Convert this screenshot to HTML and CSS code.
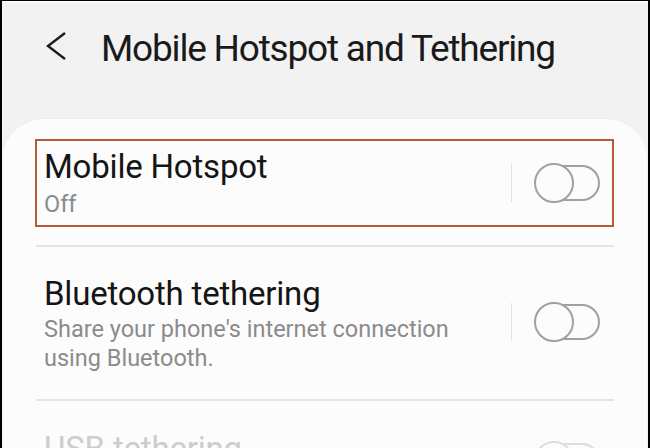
FILE: index.html
```html
<!DOCTYPE html>
<html lang="en">
<head>
<meta charset="utf-8" />
<title>Mobile Hotspot and Tethering</title>
<link rel="stylesheet" href="styles.css">
</head>
<body>
<div class="screen">
  <header class="appbar">
    <svg class="back" width="20" height="28" viewBox="0 0 20 28">
      <path d="M19 1 L2 14 L19 27" fill="none" stroke="#1c1c1c" stroke-width="2.4"/>
    </svg>
    <h1 class="title">Mobile Hotspot and Tethering</h1>
  </header>
  <main class="card">
    <div class="row row-hl">
      <div class="row-text">
        <div class="row-title">Mobile Hotspot</div>
        <div class="row-sub">Off</div>
      </div>
      <div class="row-sep"></div>
      <span class="switch"><span class="knob"></span></span>
    </div>
    <div class="divider"></div>
    <div class="row row-bt">
      <div class="row-text">
        <div class="row-title">Bluetooth tethering</div>
        <div class="row-sub">Share your phone's internet connection<br>using Bluetooth.</div>
      </div>
      <div class="row-sep"></div>
      <span class="switch"><span class="knob"></span></span>
    </div>
    <div class="divider"></div>
    <div class="row row-off">
      <div class="row-text">
        <div class="row-title">USB tethering</div>
      </div>
      <span class="switch"><span class="knob"></span></span>
    </div>
  </main>
</div>
</body>
</html>
```

FILE: styles.css
```css
body {
  margin:0; background:#000;
  font-family: Roboto, "Noto Sans", sans-serif;
}
.screen {
  width:650px; height:448px; box-sizing:border-box; overflow:hidden;
  border-top:1px solid #000; border-left:2px solid #000; border-right:2px solid #000;
  background:#f2f2f2;
  box-shadow: inset 0 2px 0 #fbfbfb;
}
.appbar {
  height:117px; display:flex; align-items:flex-start;
  padding:26px 0 0 44px; box-sizing:border-box; gap:35px;
}
.back { margin-top:5px; }
.title {
  margin:0; font-weight:400; font-size:37px; line-height:44px; color:#1a1a1a;
  letter-spacing:-1.2px;
}
.card {
  background:#fcfcfc; margin:0 1px; border-radius:40px 40px 0 0;
  padding:20px 33px 0 32px; height:400px;
  border-top:1px solid #ececec;
}
.row {
  display:flex; align-items:center; padding:0 12px 0 7px;
  border:2px solid transparent;
}
.row-hl {
  border-color:#b75a36; padding-top:8px; padding-bottom:6px;
}
.row-text { flex:1; }
.row-title {
  font-size:33px; color:#151515; line-height:36px; letter-spacing:-0.2px;
}
.row-sub {
  font-size:23.5px; color:#8b8b8b; line-height:29px; margin-top:5px;
}
.row-bt { padding-top:27px; }
.row-bt .row-sub { margin-top:3px; }
.row-bt .switch, .row-bt .row-sep { margin-bottom:6px; }
.row-hl .switch, .row-hl .row-sep { margin-bottom:3px; }
.row-sep {
  width:1px; height:38px; background:#e2e2e2; margin-right:22px;
}
.switch {
  position:relative; width:66px; height:40px; flex:none;
}
.switch::before {
  content:""; position:absolute; left:6px; right:0; top:2px; bottom:2px;
  border:2px solid #a0a0a0; border-radius:18px; box-sizing:border-box;
}
.knob {
  position:absolute; left:0; top:0; width:40px; height:40px; box-sizing:border-box;
  border:2px solid #a0a0a0; border-radius:50%; background:#fcfcfc;
}
.divider {
  height:2px; background:#e4e4e4; margin:18px 0 0 1px;
}
.row-bt + .divider { margin-top:24px; }
.row-off { padding-top:28px; align-items:flex-start; }
.row-off .row-title { color:#cdcdcd; }
.row-off .switch { margin-top:10px; }
.row-off .switch::before, .row-off .knob { border-color:#dddddd; }
```
